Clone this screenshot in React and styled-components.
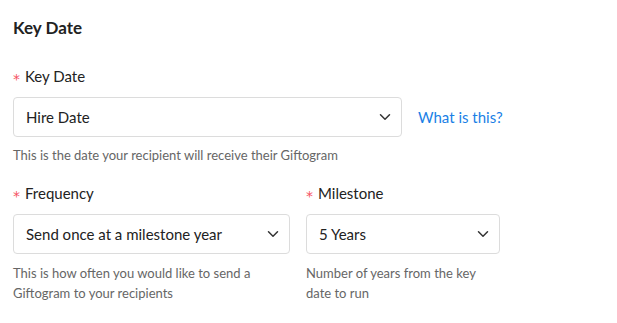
import React from "react";
import styled, { createGlobalStyle } from "styled-components";

const GlobalStyle = createGlobalStyle`
  body {
    margin: 0;
    background: #fff;
    font-family: Lato, "Open Sans", sans-serif;
    color: #333;
  }
`;

function Chevron() {
  return (
    <svg width="12" height="8" viewBox="0 0 12 8" fill="none">
      <path d="M1.5 1.8L6 6.2L10.5 1.8" stroke="#333" strokeWidth="1.5" strokeLinecap="round" strokeLinejoin="round" />
    </svg>
  );
}

function Select({ value, width }) {
  return (
    <SelectBox $width={width}>
      <span>{value}</span>
      <Chevron />
    </SelectBox>
  );
}

function App() {
  return (
    <Container>
      <GlobalStyle />
      <Title>Key Date</Title>

      <Field>
        <Label>
          <Star>*</Star>Key Date
        </Label>
        <Row>
          <Select value="Hire Date" width={389} />
          <HelpLink href="#">What is this?</HelpLink>
        </Row>
        <Hint>This is the date your recipient will receive their Giftogram</Hint>
      </Field>

      <Columns>
        <Field $width={277}>
          <Label>
            <Star>*</Star>Frequency
          </Label>
          <Select value="Send once at a milestone year" width={277} />
          <Hint $gap={9}>This is how often you would like to send a Giftogram to your recipients</Hint>
        </Field>
        <Field $width={194}>
          <Label>
            <Star>*</Star>Milestone
          </Label>
          <Select value="5 Years" width={194} />
          <Hint $gap={9}>Number of years from the key date to run</Hint>
        </Field>
      </Columns>
    </Container>
  );
}

export default App;

const Container = styled.div`
  padding: 17px 13px 0;
  display: flex;
  flex-direction: column;
`;

const Title = styled.h2`
  margin: 0 0 27px;
  font-size: 17px;
  font-weight: 700;
  line-height: 22px;
  color: #222;
`;

const Field = styled.div`
  display: flex;
  flex-direction: column;
  width: ${(p) => (p.$width ? `${p.$width}px` : "auto")};
`;

const Label = styled.div`
  font-size: 15px;
  line-height: 20px;
  color: #222;
  margin-bottom: 11px;
  display: flex;
  align-items: center;
`;

const Star = styled.span`
  color: #f5515f;
  font-family: "DejaVu Sans", sans-serif;
  font-size: 14px;
  line-height: 20px;
  width: 12px;
  position: relative;
  top: 3px;
`;

const Row = styled.div`
  display: flex;
  align-items: center;
  gap: 16px;
`;

const SelectBox = styled.div`
  box-sizing: border-box;
  width: ${(p) => p.$width}px;
  height: 40px;
  border: 1px solid #dcdcdc;
  border-radius: 4px;
  padding: 0 10px 0 12px;
  display: flex;
  align-items: center;
  justify-content: space-between;
  font-size: 15px;
  color: #222;
  background: #fff;
`;

const HelpLink = styled.a`
  color: #1a7fe6;
  font-size: 15px;
  text-decoration: none;
`;

const Hint = styled.div`
  margin-top: ${(p) => p.$gap ?? 8}px;
  font-size: 13px;
  line-height: 20px;
  color: #666;
`;

const Columns = styled.div`
  display: flex;
  gap: 16px;
  margin-top: 18px;
`;
